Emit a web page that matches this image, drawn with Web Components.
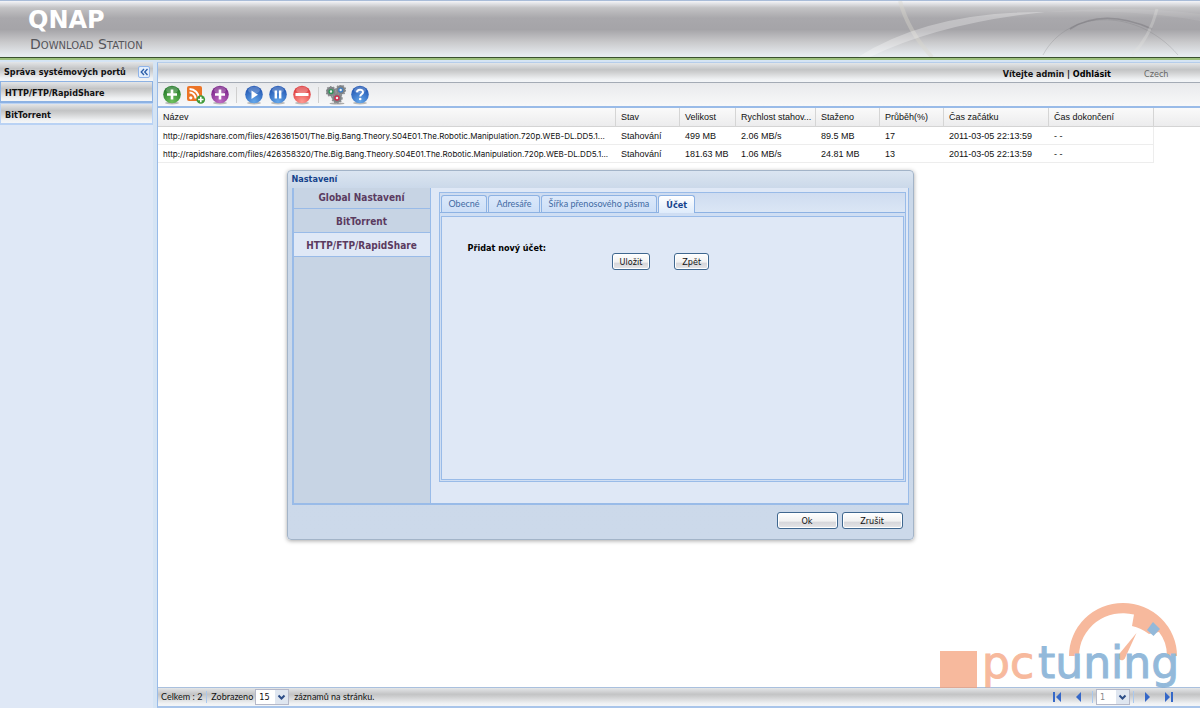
<!DOCTYPE html>
<html lang="cs">
<head>
<meta charset="utf-8">
<title>QNAP Download Station</title>
<style>
html, body { height: 100%; margin: 0; }
body {
  --ui: "DejaVu Sans Condensed", "DejaVu Sans", sans-serif;
  --text: Lato, "DejaVu Sans Condensed", sans-serif;
  --grid: "Liberation Sans", Arial, sans-serif;
  --line: #99bbe8;
  --pane: #dfe8f6;
  --silver: linear-gradient(#e4e6e8, #c3c4c5 35%, #cfd0d1 50%, #eff1f3 85%, #f4f6f8);
  font: 9px/12px var(--ui);
  color: #111;
  background: #d5e4f4;
}
</style>
</head>
<body>
<ds-app></ds-app>

<template id="t-app">
  <style>
    :host { display: flex; flex-direction: column; height: 100%; position: relative; }
    .work { flex: 1; display: flex; gap: 4px; padding-top: 2px; min-height: 0; }
    ds-main { flex: 1; min-width: 0; }
    ds-dialog { position: absolute; inset: 2px 0 0; margin: auto; }
    ds-watermark { position: absolute; right: 19px; bottom: 18px; }
  </style>
  <ds-header></ds-header>
  <div class="work">
    <ds-sidebar>
      <ds-side-item active>HTTP/FTP/RapidShare</ds-side-item>
      <ds-side-item>BitTorrent</ds-side-item>
    </ds-sidebar>
    <ds-main></ds-main>
  </div>
  <ds-dialog></ds-dialog>
  <ds-watermark></ds-watermark>
</template>

<template id="t-header">
  <style>
    :host { display: block; position: relative; box-sizing: border-box; height: 60px; overflow: hidden;
      border-top: 1px solid #a9bcd8; border-bottom: 2px solid #9cc07c;
      background: linear-gradient(#f4f5f9, #c3c3c5 12%, #a9a8ac 30%, #a5a4a8 50%, #c9c9cb 72%, #e6ebef 95%, #e6ebef); }
    :host::after { content: ""; position: absolute; left: 0; right: 0; bottom: 0; height: 1px; background: #39512f; }
    .brand { padding: 8px 0 0 28px; }
    .name { font: bold 24px/22px "DejaVu Sans", sans-serif; color: #fff; }
    .sub { margin: 6px 0 0 2px; font: 14px/14px "DejaVu Sans", sans-serif; font-variant: small-caps; color: #55555a; }
    svg { position: absolute; right: 0; top: 0; }
  </style>
  <svg width="360" height="56" viewBox="0 0 360 56" aria-hidden="true" fill="none">
    <path d="M60 0Q68 30 92 56" stroke="#d9d8cc" stroke-width="4" opacity=".4"/>
    <path d="M18 56Q90 10 205 11Q100 22 30 56Z" fill="#fff" opacity=".3"/>
    <path d="M205 11Q300 8 360 20V13Q290 4 205 11Z" fill="#fff" opacity=".08"/>
    <path d="M203 54C228 7 298 7 338 54" stroke="#77767c" stroke-width="1" opacity=".25"/>
    <path d="M230 28C252 14 280 14 312 28" stroke="#77767c" stroke-width="1.500" opacity=".5"/>
    <path d="M317 8Q310 36 292 54" stroke="#e4e3e0" stroke-width="3" opacity=".3"/>
  </svg>
  <div class="brand">
    <div class="name">QNAP</div>
    <div class="sub">Download Station</div>
  </div>
</template>

<template id="t-sidebar">
  <style>
    :host { display: flex; flex-direction: column; width: 153px; background: var(--pane); box-sizing: border-box; }
    .head { display: flex; align-items: center; justify-content: space-between; height: 19px; padding: 0 3px 0 4px; background: var(--silver); }
    h2 { margin: 0; font: bold 9px/12px var(--ui); color: #111; }
    button { width: 12px; height: 12px; padding: 0; border: 1px solid #8fb4ea; border-radius: 2px; background: #e3eefc; display: grid; place-items: center; }
  </style>
  <div class="head">
    <h2>Správa systémových portů</h2>
    <button type="button" aria-label="Sbalit"><svg width="8" height="8" viewBox="0 0 8 8" fill="none" stroke="#2c5ea8" stroke-width="1.3"><path d="M4 1L1.200 4L4 7M7.500 1L4.700 4L7.500 7"/></svg></button>
  </div>
  <slot></slot>
</template>

<template id="t-side-item">
  <style>
    :host { display: block; box-sizing: border-box; height: 22px; border: 1px solid #b9d2f4; border-bottom-width: 2px; background: var(--silver); }
    :host([active]) { border-color: #8db2e3; }
    a { display: block; padding: 1px 4px 0; font: bold 9px/20px var(--ui); color: #111; text-decoration: none; }
  </style>
  <a href="#"><slot></slot></a>
</template>

<template id="t-main">
  <style>
    :host { display: flex; flex-direction: column; background: #fff; border-left: 1px solid var(--line); border-top: 1px solid #b5cdea; border-bottom: 2px solid #a9c5ea; }
    .top { display: flex; align-items: center; justify-content: flex-end; gap: 33px; height: 20px; padding: 3px 31px 0 0; box-sizing: border-box; background: var(--silver); border-bottom: 1px solid #a4abb5; font-weight: bold; }
    .top a { color: #000; text-decoration: none; }
    .top select { appearance: none; border: 0; padding: 0; margin: 0; background: none; font: 9px/12px var(--ui); color: #666; }
    ds-grid { flex: 1; }
  </style>
  <div class="top">
    <span>Vítejte admin | <a href="#">Odhlásit</a></span>
    <select aria-label="Jazyk"><option>Czech</option></select>
  </div>
  <ds-toolbar></ds-toolbar>
  <ds-grid></ds-grid>
  <ds-pager></ds-pager>
</template>

<template id="t-toolbar">
  <style>
    :host { display: flex; align-items: center; gap: 4px; height: 23px; padding-left: 4px; background: linear-gradient(#e9eaec, #f7f8f9); border-bottom: 2px solid #99bbe8; }
    button { border: 0; padding: 0; background: none; width: 20px; height: 20px; display: block; }
    i { width: 1px; height: 16px; background: #cfcfcf; margin: 0 3px 0 2px; }
    svg { display: block; }
  </style>
  <svg width="0" height="0" style="position:absolute" aria-hidden="true">
    <defs>
      <radialGradient id="gg" cx=".5" cy=".9" r=".8"><stop offset="0" stop-color="#6fc25d"/><stop offset="1" stop-color="#257a2a"/></radialGradient>
      <radialGradient id="gp" cx=".5" cy=".9" r=".8"><stop offset="0" stop-color="#c06cc4"/><stop offset="1" stop-color="#7a2489"/></radialGradient>
      <radialGradient id="gb" cx=".5" cy=".9" r=".8"><stop offset="0" stop-color="#65a8ea"/><stop offset="1" stop-color="#2358b4"/></radialGradient>
      <radialGradient id="gr" cx=".5" cy=".9" r=".8"><stop offset="0" stop-color="#ff9a92"/><stop offset="1" stop-color="#dc3a3c"/></radialGradient>
    </defs>
  </svg>
  <button type="button" aria-label="Přidat"><svg width="20" height="20" viewBox="0 0 20 20"><ellipse cx="10" cy="18" rx="7" ry="1.500" fill="#bbb"/><circle cx="10" cy="9.500" r="8.800" fill="url(#gg)"/><ellipse cx="10" cy="5" rx="6" ry="3.500" fill="#fff" opacity=".22"/><path d="M10 4.500v10M5 9.500h10" stroke="#fff" stroke-width="2.600"/></svg></button>
  <button type="button" aria-label="RSS"><svg width="20" height="20" viewBox="0 0 20 20"><rect x="1" y="1" width="15" height="15" rx="2" fill="#ec7426"/><circle cx="4.800" cy="12.800" r="1.600" fill="#fff"/><path d="M3.500 7.500a6 6 0 0 1 6 6M3.500 4a9.500 9.500 0 0 1 9.500 9.500" fill="none" stroke="#fff" stroke-width="1.900"/><circle cx="14.800" cy="14.500" r="4.300" fill="#3f9a3a"/><path d="M14.800 11.800v5.400M12.100 14.500h5.400" stroke="#fff" stroke-width="1.600"/></svg></button>
  <button type="button" aria-label="Přidat torrent"><svg width="20" height="20" viewBox="0 0 20 20"><ellipse cx="10" cy="18" rx="7" ry="1.500" fill="#bbb"/><circle cx="10" cy="9.500" r="8.800" fill="url(#gp)"/><ellipse cx="10" cy="5" rx="6" ry="3.500" fill="#fff" opacity=".22"/><path d="M10 4.500v10M5 9.500h10" stroke="#fff" stroke-width="2.600"/></svg></button>
  <i></i>
  <button type="button" aria-label="Spustit"><svg width="20" height="20" viewBox="0 0 20 20"><ellipse cx="10" cy="18" rx="7" ry="1.500" fill="#bbb"/><circle cx="10" cy="9.500" r="8.800" fill="url(#gb)"/><ellipse cx="10" cy="5" rx="6" ry="3.500" fill="#fff" opacity=".22"/><path d="M7.500 5.500v8.500l6.500-4.250z" fill="#fff"/></svg></button>
  <button type="button" aria-label="Pozastavit"><svg width="20" height="20" viewBox="0 0 20 20"><ellipse cx="10" cy="18" rx="7" ry="1.500" fill="#bbb"/><circle cx="10" cy="9.500" r="8.800" fill="url(#gb)"/><ellipse cx="10" cy="5" rx="6" ry="3.500" fill="#fff" opacity=".22"/><path d="M7.800 5.500v8M12.200 5.500v8" stroke="#fff" stroke-width="2.400"/></svg></button>
  <button type="button" aria-label="Odstranit"><svg width="20" height="20" viewBox="0 0 20 20"><ellipse cx="10" cy="18" rx="7" ry="1.500" fill="#bbb"/><circle cx="10" cy="9.500" r="8.800" fill="url(#gr)"/><ellipse cx="10" cy="5" rx="6" ry="3.500" fill="#fff" opacity=".25"/><path d="M3.500 9.500h13" stroke="#fff" stroke-width="3"/></svg></button>
  <i></i>
  <button type="button" aria-label="Nastavení"><svg width="20" height="20" viewBox="0 0 20 20"><ellipse cx="11" cy="18.500" rx="7.500" ry="1" fill="#aaa"/><g fill="none" stroke="#7f8285" stroke-width="3"><circle cx="5" cy="6.500" r="3.200"/><circle cx="14.700" cy="5" r="3.200"/><circle cx="11" cy="13" r="3.400"/></g><g fill="none" stroke="#8b8e91" stroke-width="1.500" stroke-dasharray="1.500 1.500"><circle cx="5" cy="6.500" r="4.800"/><circle cx="14.700" cy="5" r="4.800"/><circle cx="11" cy="13" r="5"/></g><g fill="#eee" stroke-width="1.400"><circle cx="5" cy="6.500" r="1.900" stroke="#2d9557"/><circle cx="14.700" cy="5" r="1.900" stroke="#3f7fc4"/><circle cx="11" cy="13" r="2" stroke="#cf2b4c"/></g></svg></button>
  <button type="button" aria-label="Nápověda"><svg width="20" height="20" viewBox="0 0 20 20"><ellipse cx="10" cy="18" rx="7" ry="1.500" fill="#bbb"/><circle cx="10" cy="9.500" r="8.800" fill="url(#gb)"/><ellipse cx="10" cy="5" rx="6" ry="3.500" fill="#fff" opacity=".22"/><path d="M7 7.300C7 3.800 13 3.800 13 7.200C13 9.300 10.200 9 10.200 11.500" fill="none" stroke="#fff" stroke-width="2"/><circle cx="10.200" cy="14" r="1.300" fill="#fff"/></svg></button>
</template>

<template id="t-grid">
  <style>
    :host { display: block; font: 9px/12px var(--grid); color: #111; }
    table { width: 100%; table-layout: fixed; border-collapse: separate; border-spacing: 0; }
    th, td { box-sizing: border-box; height: 18px; padding: 0 0 0 5px; text-align: left; font-weight: normal; white-space: nowrap; overflow: hidden; text-overflow: ellipsis; }
    th { height: 19px; background: linear-gradient(#fafafa, #ececed); border-right: 1px solid #d5d5d5; border-bottom: 1px solid #d4d4d4; }
    td { border-bottom: 1px solid #ededed; }
    td:first-child { font: 8px/12px Inter, var(--grid); }
    td:nth-child(8) { border-right: 1px solid #ededed; }
    th:last-child, td:last-child { border-right: 0; }
    td:last-child { border-bottom: 0; }
    .n { width: 458px } .w56 { width: 56px } .w64 { width: 64px } .w80 { width: 80px } .w104 { width: 105px }
  </style>
  <table>
    <colgroup><col class="n"><col class="w64"><col class="w56"><col class="w80"><col class="w64"><col class="w64"><col class="w104"><col class="w104"><col></colgroup>
    <thead><tr><th>Název</th><th>Stav</th><th>Velikost</th><th>Rychlost stahov...</th><th>Staženo</th><th>Průběh(%)</th><th>Čas začátku</th><th>Čas dokončení</th><th></th></tr></thead>
    <tbody>
      <tr><td>http://rapidshare.com/files/426361501/The.Big.Bang.Theory.S04E01.The.Robotic.Manipulation.720p.WEB-DL.DD5.1...</td><td>Stahování</td><td>499 MB</td><td>2.06 MB/s</td><td>89.5 MB</td><td>17</td><td>2011-03-05 22:13:59</td><td>- -</td><td></td></tr>
      <tr><td>http://rapidshare.com/files/426358320/The.Big.Bang.Theory.S04E01.The.Robotic.Manipulation.720p.WEB-DL.DD5.1...</td><td>Stahování</td><td>181.63 MB</td><td>1.06 MB/s</td><td>24.81 MB</td><td>13</td><td>2011-03-05 22:13:59</td><td>- -</td><td></td></tr>
    </tbody>
  </table>
</template>

<template id="t-select">
  <style>
    :host { display: inline-flex; position: relative; }
    select { appearance: none; box-sizing: border-box; width: 34px; height: 16px; margin: 0; padding: 0 0 0 3px; border: 1px solid #b5b8c8; border-radius: 0; background: #fff; font: 9px/12px var(--ui); color: #111; }
    :host([dim]) select { color: #888; }
    svg { position: absolute; right: 1px; top: 1px; pointer-events: none; }
  </style>
  <select></select>
  <svg width="13" height="14" viewBox="0 0 13 14"><rect width="13" height="14" fill="#dfe6f0"/><path d="M3.500 5.500L6.500 8.500L9.500 5.500" fill="none" stroke="#2b4c86" stroke-width="2"/></svg>
</template>

<template id="t-pager">
  <style>
    :host { display: flex; align-items: center; gap: 2px; height: 18px; padding: 0 24px 0 3px; background: var(--silver); border-top: 1px solid #a9c0de; font-family: var(--text); }
    .bar { width: 1px; height: 12px; background: #a9c8ee; }
    .sep { margin: 0 2px; }
    .end { margin-left: auto; display: flex; align-items: center; gap: 7px; }
    button { border: 0; padding: 0 1px; background: none; width: 14px; height: 12px; }
    .pg { display: flex; gap: 3px; align-items: center; }
    .note { margin-left: 3px; }
    svg { display: block; }
  </style>
  <span>Celkem : 2</span><span class="bar sep"></span><span>Zobrazeno</span>
  <ds-select values="15" label="Zobrazeno záznamů"></ds-select>
  <span class="note">záznamů na stránku.</span>
  <div class="end">
    <button type="button" aria-label="První"><svg width="12" height="12" viewBox="0 0 12 12" fill="#3568c8"><path d="M2 1h2v10H2zM10 1v10L5 6z"/></svg></button>
    <button type="button" aria-label="Předchozí"><svg width="12" height="12" viewBox="0 0 12 12" fill="#3568c8"><path d="M9 1v10L4 6z"/></svg></button>
    <div class="pg"><span class="bar"></span><ds-select dim values="1" label="Strana"></ds-select><span class="bar"></span></div>
    <button type="button" aria-label="Další"><svg width="12" height="12" viewBox="0 0 12 12" fill="#3568c8"><path d="M3 1v10l5-5z"/></svg></button>
    <button type="button" aria-label="Poslední"><svg width="12" height="12" viewBox="0 0 12 12" fill="#3568c8"><path d="M2 1v10l5-5zM8 1h2v10H8z"/></svg></button>
  </div>
</template>

<template id="t-button">
  <style>
    :host { display: inline-block; }
    button { box-sizing: border-box; width: 100%; height: 17px; padding: 0 7px; border: 1px solid #3f678f; border-radius: 3px; background: linear-gradient(#fff, #f1f1f1 55%, #d6d6da 60%, #e6e6e8); box-shadow: inset 0 0 0 1px #fff; font: 9px/12px var(--ui); color: #111; }
  </style>
  <button type="button"><slot></slot></button>
</template>

<template id="t-dialog">
  <style>
    :host { display: flex; flex-direction: column; box-sizing: border-box; width: 627px; height: 370px; padding: 0 4px; border: 1px solid #a3b4c8; border-radius: 4px; background: linear-gradient(#dbe5f1, #cad8e9 18px, #ccd9ea); box-shadow: 0 1px 4px rgba(0,0,0,.35); }
    h1 { margin: 0; font: bold 9px/17px var(--ui); color: #15428b; }
    .body { flex: 1; display: flex; min-height: 0; border: 2px solid #99bbe8; border-top-width: 0; border-right-width: 1px; }
    nav { width: 136px; background: #c7d4e4; border-right: 1px solid #99bbe8; }
    nav a { display: block; box-sizing: border-box; height: 24px; padding-top: 3px; border-bottom: 1px solid #99bbe8; font: bold 10px/20px var(--ui); color: #5b3b5f; text-align: center; text-decoration: none; }
    nav a:first-child { height: 21px; padding-top: 0; }
    nav a.on { background: var(--pane); }
    ds-tabs { flex: 1; }
    footer { display: flex; justify-content: flex-end; gap: 4px; padding: 7px 6px 10px 0; }
    footer ds-button { width: 61px; }
  </style>
  <h1>Nastavení</h1>
  <div class="body">
    <nav><a href="#">Global Nastavení</a><a href="#">BitTorrent</a><a href="#" class="on">HTTP/FTP/RapidShare</a></nav>
    <ds-tabs></ds-tabs>
  </div>
  <footer><ds-button>Ok</ds-button><ds-button>Zrušit</ds-button></footer>
</template>

<template id="t-tabs">
  <style>
    :host { display: flex; box-sizing: border-box; padding: 4px 2px 21px 8px; background: var(--pane); }
    .box { flex: 1; display: flex; flex-direction: column; border: 1px solid #99bbe8; background: #cfdef3; }
    .strip { display: flex; align-items: flex-end; gap: 1px; padding: 1px 0 0 1px; height: 18px; background: linear-gradient(#cedcf0, #dbe6f5); border-bottom: 1px solid #8db2e3; }
    .strip button { box-sizing: border-box; height: 17px; padding: 0 7px; border: 1px solid #8db2e3; border-bottom: 0; border-radius: 3px 3px 0 0; background: linear-gradient(#dbe8fa, #cddff7); font: 9px/12px var(--text); color: #416aa3; }
    .strip button[aria-selected=true] { height: 18px; margin-bottom: -1px; background: linear-gradient(#fff, #deebfb); color: #15428b; font: bold 9px/12px var(--ui); }
    .panel { flex: 1; margin: 3px 1px 1px; border: 1px solid #99bbe8; background: var(--pane); }
    .form { display: grid; grid-template-columns: 144px auto auto; justify-content: start; padding: 25px 0 0 26px; }
    .form b { line-height: 12px; color: #000; }
    .form ds-button { margin: 11px 24px 0 0; }
  </style>
  <div class="box">
    <div class="strip" role="tablist">
      <button type="button" role="tab">Obecné</button><button type="button" role="tab">Adresáře</button><button type="button" role="tab">Šířka přenosového pásma</button><button type="button" role="tab" aria-selected="true">Účet</button>
    </div>
    <div class="panel" role="tabpanel">
      <div class="form"><b>Přidat nový účet:</b><ds-button>Uložit</ds-button><ds-button>Zpět</ds-button></div>
    </div>
  </div>
</template>

<template id="t-watermark">
  <style>
    :host { display: block; pointer-events: none; opacity: .72; }
    svg { display: block; }
    text { font: 44px "DejaVu Sans", sans-serif; stroke-width: 1; }
    .o { fill: #f49f78; stroke: #f49f78; }
    .b { fill: #6a9fcc; stroke: #6a9fcc; }
  </style>
  <svg width="241" height="88" viewBox="0 0 241 88">
    <rect y="49" width="37" height="37" fill="#f49f78"/>
    <g fill="#f49f78">
      <path d="M129 54A54 53 0 0 1 237 54H227Q227 40 219 30L209 32Q201 26 192 24L194 12.500A44 43 0 0 0 139 54Z"/>
      <path d="M196.500 31L185.500 55A3.800 3.800 0 1 1 180 51Z"/>
    </g>
    <text class="o" x="42" y="76">pc</text>
    <path d="M213 20L220 27L213.500 34L207 28Z" fill="#6a9fcc"/>
    <text class="b" x="98" y="76">tuning</text>
  </svg>
</template>

<script>
const define = (tag, tpl, ready) => customElements.define(tag, class extends HTMLElement {
  constructor() {
    super();
    this.attachShadow({ mode: 'open' }).append(document.getElementById(tpl).content.cloneNode(true));
  }
  connectedCallback() { if (ready) ready(this, this.shadowRoot); }
});
define('ds-button', 't-button');
define('ds-select', 't-select', (host, root) => {
  const select = root.querySelector('select');
  select.setAttribute('aria-label', host.getAttribute('label'));
  select.replaceChildren(...host.getAttribute('values').split(',').map(v => new Option(v)));
});
define('ds-header', 't-header');
define('ds-side-item', 't-side-item');
define('ds-sidebar', 't-sidebar');
define('ds-toolbar', 't-toolbar');
define('ds-grid', 't-grid');
define('ds-pager', 't-pager');
define('ds-main', 't-main');
define('ds-tabs', 't-tabs');
define('ds-dialog', 't-dialog');
define('ds-watermark', 't-watermark');
define('ds-app', 't-app');
</script>
</body>
</html>
